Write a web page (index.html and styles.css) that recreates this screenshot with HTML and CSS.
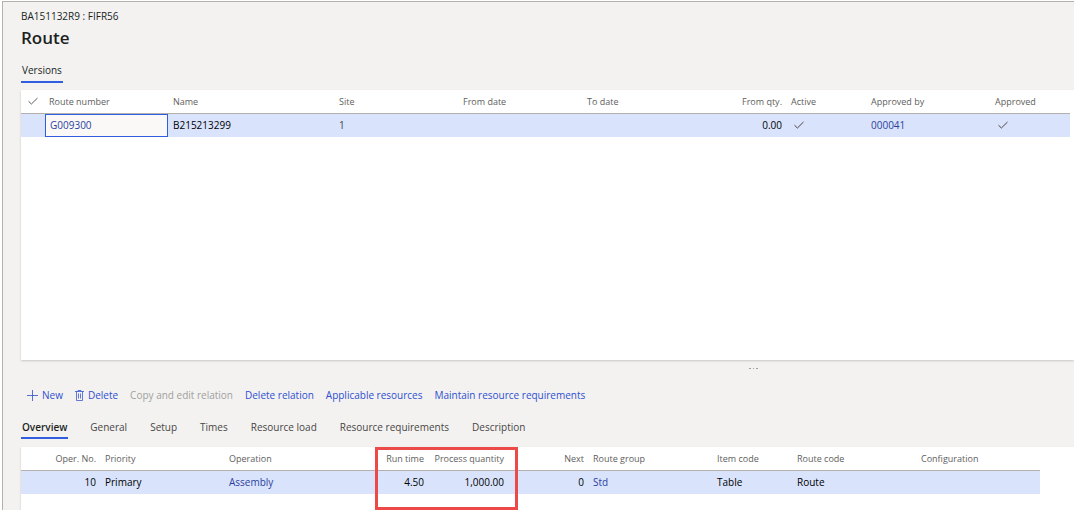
FILE: index.html
```html
<!DOCTYPE html>
<html lang="en">
<head>
<meta charset="utf-8">
<title>Route</title>
<link rel="stylesheet" href="styles.css">
</head>
<body>
<svg class="sprite" aria-hidden="true">
  <symbol id="check" viewBox="0 0 10 8"><path d="M.5 4.2 3.4 7 9.5 1" fill="none" stroke="currentColor"/></symbol>
</svg>
<main class="page">
  <header class="heading">
    <p class="record">BA151132R9 : FIFR56</p>
    <h1 class="title">Route</h1>
  </header>
  <div class="tabs tabs-top" role="tablist" aria-label="Route">
    <button class="tab tab-active" role="tab" aria-selected="true">Versions</button>
  </div>
  <section class="panel panel-versions">
    <table class="grid grid-versions">
      <colgroup>
        <col class="w-mark"><col class="w-m"><col class="w-l"><col class="w-m"><col class="w-m"><col class="w-m"><col class="w-s"><col class="w-s"><col class="w-m"><col>
      </colgroup>
      <thead>
        <tr>
          <th class="mark"><svg class="check" role="img" aria-label="Select"><use href="#check"/></svg></th>
          <th>Route number</th><th>Name</th><th>Site</th><th>From date</th><th>To date</th>
          <th class="num">From qty.</th><th>Active</th><th>Approved by</th><th>Approved</th>
        </tr>
      </thead>
      <tbody>
        <tr>
          <td></td>
          <td class="edit"><input class="cell-input" type="text" value="G009300" aria-label="Route number"></td>
          <td>B215213299</td><td class="soft">1</td><td></td><td></td>
          <td class="num">0.00</td>
          <td class="flag"><svg class="check" role="img" aria-label="Active"><use href="#check"/></svg></td>
          <td><a class="link" href="#">000041</a></td>
          <td class="flag"><svg class="check" role="img" aria-label="Approved"><use href="#check"/></svg></td>
        </tr>
      </tbody>
    </table>
  </section>
  <div class="splitter"><svg class="dots" viewBox="0 0 9 1" aria-hidden="true"><path d="M0 0h2v1H0zM4 0h1v1H4zM7 0h2v1H7z" fill="#a19f9d"/></svg></div>
  <div class="toolbar" role="toolbar" aria-label="Operations">
    <button class="action"><svg class="icon-plus" viewBox="0 0 11 11" aria-hidden="true"><path d="M5.5 0v11M0 5.5h11" fill="none" stroke="currentColor" stroke-opacity=".8"/></svg>New</button>
    <button class="action"><svg class="icon-bin" viewBox="0 0 9 11" aria-hidden="true"><path d="M0 1.5h9M3 1.5V.5h3v1M1.5 1.5v9h6v-9M3.5 3.5v5M5.5 3.5v5" fill="none" stroke="currentColor" stroke-opacity=".75"/></svg>Delete</button>
    <button class="action" disabled>Copy and edit relation</button>
    <button class="action">Delete relation</button>
    <button class="action">Applicable resources</button>
    <button class="action">Maintain resource requirements</button>
  </div>
  <div class="tabs tabs-detail" role="tablist" aria-label="Operation details">
    <button class="tab tab-active tab-strong" role="tab" aria-selected="true">Overview</button>
    <button class="tab" role="tab">General</button>
    <button class="tab" role="tab">Setup</button>
    <button class="tab" role="tab">Times</button>
    <button class="tab" role="tab">Resource load</button>
    <button class="tab" role="tab">Resource requirements</button>
    <button class="tab" role="tab">Description</button>
  </div>
  <section class="panel panel-operations">
    <table class="grid grid-operations">
      <colgroup>
        <col class="w-s"><col class="w-m"><col class="w-m"><col class="w-s"><col class="w-s"><col class="w-s"><col class="w-m"><col class="w-s"><col class="w-m"><col>
      </colgroup>
      <thead>
        <tr>
          <th class="num">Oper. No.</th><th>Priority</th><th>Operation</th><th class="num">Run time</th><th class="num">Process quantity</th>
          <th class="num">Next</th><th>Route group</th><th>Item code</th><th>Route code</th><th>Configuration</th>
        </tr>
      </thead>
      <tbody>
        <tr>
          <td class="num">10</td><td>Primary</td><td><a class="link" href="#">Assembly</a></td><td class="num">4.50</td><td class="num">1,000.00</td>
          <td class="num">0</td><td><a class="link" href="#">Std</a></td><td>Table</td><td>Route</td><td></td>
        </tr>
      </tbody>
    </table>
    <div class="highlight"></div>
  </section>
</main>
</body>
</html>
```

FILE: styles.css
```css
* { box-sizing: border-box; }
body {
  margin: 0;
  padding: 1px 0 0 2px;
  background: #fff;
  color: #201f1e;
  font: 10px/16px "Open Sans", "Noto Sans", sans-serif;
}
button, input { font: inherit; }
.sprite { display: none; }
.page {
  display: flex;
  flex-direction: column;
  min-height: calc(100vh - 1px);
  padding-left: 18px;
  border-top: 1px solid #b3b0ad;
  border-left: 1px solid #b3b0ad;
  background: #f3f2f1;
}
.heading { padding-top: 6px; }
.record { margin: 0; }
.title { margin: 2px 0 0; font-size: 17px; line-height: 24px; font-weight: 600; }

.tabs { display: flex; gap: 21px; }
.tabs-top { padding: 12px 0 7px; }
.tabs-detail { padding: 16px 0 8px; }
.tab {
  padding: 0 1px 2px;
  border: 0;
  border-bottom: 2px solid transparent;
  background: none;
  color: #484644;
  white-space: nowrap;
}
.tabs-top .tab { padding-bottom: 3px; }
.tab-active { border-color: #2f5fde; color: #201f1e; }
.tab-strong { font-weight: 600; }

.panel { background: #fff; box-shadow: 0 1px 2px #0000002e; }
.panel-versions { min-height: 270px; }
.panel-operations { position: relative; flex: 1; min-height: 63px; }

.grid { table-layout: fixed; border-collapse: collapse; }
.grid-versions { width: calc(100% - 4px); }
.grid-operations { width: calc(100% - 34px); }
.w-mark { width: 24px; }
.w-s { width: 80px; }
.w-m { width: 124px; }
.w-l { width: 166px; }
th, td { padding: 0 4px; text-align: left; white-space: nowrap; }
th { height: 23px; padding-top: 2px; font-size: 9px; font-weight: 400; color: #605e5c; }
tbody tr { height: 24px; border-top: 1px solid #b3b0ad; background: #d9e3fb; }
td { height: 24px; color: #000; }
.num { padding-right: 5px; text-align: right; }
.soft { color: #484644; }
.mark { padding: 0 7px; }
.flag { padding: 0 4px; color: #484644; }
.flag .check { margin-left: 3px; }
.check { display: block; width: 10px; height: 8px; }
.edit { padding: 0 1px 0 0; }
.cell-input {
  display: block;
  width: 100%;
  height: 23px;
  padding: 0 4px;
  border: 1px solid #2f5fde;
  border-radius: 0;
  outline: 0;
  background: #faf9f8;
  color: #2b3fa0;
}
.link { color: #2b3fa0; text-decoration: none; }

.splitter { display: flex; justify-content: flex-end; height: 27px; padding: 8px 316px 0 0; }
.dots { width: 9px; height: 1px; }

.toolbar { display: flex; gap: 12px; padding-left: 6px; }
.action {
  display: flex;
  align-items: center;
  gap: 4px;
  padding: 0;
  border: 0;
  background: none;
  color: #2f4fd0;
  white-space: nowrap;
}
.action:disabled { color: #a19f9d; }
.icon-plus { width: 11px; height: 11px; }
.icon-bin { width: 9px; height: 11px; }

.highlight { position: absolute; left: 354px; top: 0; width: 143px; height: 63px; border: 3px solid #ec4a48; }
```
